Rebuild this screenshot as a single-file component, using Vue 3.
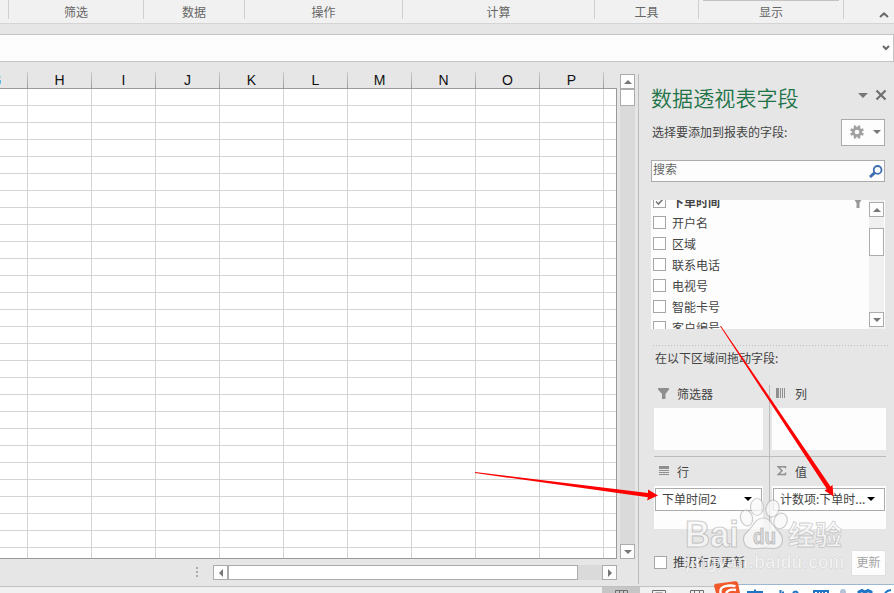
<template>
  <div class="excel">
    <!-- ribbon group captions -->
    <div class="ribbon">
      <div class="group edge"></div>
      <div v-for="g in groups" :key="g.name" class="group" :style="{ width: g.width + 'px' }">
        <span>{{ g.name }}</span>
      </div>
      <svg class="collapse" width="10" height="6" viewBox="0 0 10 6"><path d="M1 5 5 1.4 9 5" /></svg>
      <i class="gallery-edge"></i>
    </div>

    <div class="formula-row">
      <div class="formula">
        <svg width="8" height="6" viewBox="0 0 8 6"><path d="M1 1 4 4 7 1" /></svg>
      </div>
    </div>

    <div class="main">
      <div class="sheet">
        <div class="sheet-body">
          <div class="cells">
            <div class="headers">
              <div class="head first"><span>G</span></div>
              <div v-for="c in columns" :key="c" class="head">{{ c }}</div>
            </div>
            <div class="rows"></div>
          </div>
          <div class="vscroll">
            <div class="sbtn"><i class="tri up"></i></div>
            <div class="thumb"></div>
            <div class="track"></div>
            <div class="sbtn"><i class="tri down"></i></div>
          </div>
        </div>
        <div class="hscroll">
          <div class="grip"><i></i><i></i><i></i></div>
          <div class="sbtn"><i class="tri left"></i></div>
          <div class="hthumb"></div>
          <div class="htrack"></div>
          <div class="sbtn"><i class="tri right"></i></div>
        </div>
      </div>

      <div class="pane">
        <div class="title">
          <h1>数据透视表字段</h1>
          <i class="tri caret"></i>
          <svg width="12" height="12" viewBox="0 0 12 12"><path d="M1.5 1.5 10.5 10.5M10.5 1.5 1.5 10.5" /></svg>
        </div>
        <div class="choose">
          <span>选择要添加到报表的字段:</span>
          <div class="tools">
            <svg width="14" height="14" viewBox="0 0 14 14">
              <circle cx="7" cy="7" r="3.7" fill="none" stroke="#a0a0a0" stroke-width="2.8" />
              <path d="M5 .5v3M9 .5v3M5 10.500v3M9 10.500v3M.6 4.500l2.800 1M.6 9.500l2.800-1M13.400 4.500l-2.800 1M13.400 9.500l-2.800-1" stroke="#a0a0a0" stroke-width="2.500" />
            </svg>
            <i class="tri caret small"></i>
          </div>
        </div>
        <div class="search">
          <span>搜索</span>
          <svg width="14" height="13" viewBox="0 0 14 13">
            <circle cx="8.6" cy="4.9" r="3.9" />
            <path class="handle" d="M5.900 7.500 1 12" />
          </svg>
        </div>
        <div class="fields">
          <div class="list">
            <div v-for="f in fields" :key="f.name" class="field" :class="{ bold: f.checked }">
              <div class="box">
                <svg v-if="f.checked" width="11" height="11" viewBox="0 0 11 11"><path d="M2 5.5 4.5 8 9 3" /></svg>
              </div>
              <span>{{ f.name }}</span>
              <svg v-if="f.checked" class="funnel" width="8" height="9" viewBox="0 0 8 9"><path d="M0 0h8L5.5 4v5h-3V4z" /></svg>
            </div>
          </div>
          <div class="list-scroll">
            <div class="sbtn"><i class="tri up"></i></div>
            <div class="thumb"></div>
            <div class="sbtn"><i class="tri down"></i></div>
          </div>
        </div>
        <div class="drag">在以下区域间拖动字段:</div>
        <div class="areas">
          <div class="area">
            <div class="caption">
              <svg width="12" height="12" viewBox="0 0 12 12"><path fill="#8f8f8f" d="M0 0h11v1.500L7.500 6v5H4V6L0 1.500z" /></svg>
              <span>筛选器</span>
            </div>
            <div class="drop"></div>
          </div>
          <div class="area right">
            <div class="caption">
              <svg width="12" height="11" viewBox="0 0 12 11"><path fill="#8f8f8f" d="M0 0h3v10H0zM4 0h1v10H4zM6 0h1v10H6zM8 0h1v10H8z" /></svg>
              <span>列</span>
            </div>
            <div class="drop"></div>
          </div>
          <div class="area bottom">
            <div class="caption">
              <svg width="12" height="10" viewBox="0 0 12 10"><path fill="#8f8f8f" d="M1 0h10v3H1zM1 4h10v1H1zM1 6h10v1H1zM1 8h10v1H1z" /></svg>
              <span>行</span>
            </div>
            <div class="drop"><div class="pill"><span>下单时间2</span><i class="tri black"></i></div></div>
          </div>
          <div class="area right bottom">
            <div class="caption">
              <svg width="12" height="10" viewBox="0 0 12 10"><path fill="none" stroke="#8f8f8f" stroke-width="1.4" d="M9.500 2.500V.7H2.200L6 4.700 2.200 8.500H9.500V6.500" /></svg>
              <span>值</span>
            </div>
            <div class="drop"><div class="pill"><span>计数项:下单时...</span><i class="tri black"></i></div></div>
          </div>
        </div>
        <div class="defer">
          <div class="box"></div>
          <span>推迟布局更新</span>
          <div class="update">更新</div>
        </div>
      </div>
    </div>

    <div class="status">
      <div class="view active"><svg width="13" height="6" viewBox="0 0 13 6"><path d="M.5 6V.5h12V6M4.500.5V6M8.500.5V6M0 4.500h13" /></svg></div>
      <div class="view"><svg width="14" height="6" viewBox="0 0 14 6"><path d="M.5 6V.5h13V6M3.500 6V3h7v3" /></svg></div>
      <div class="view"><svg width="14" height="6" viewBox="0 0 14 6"><path d="M.5 6V.5h13V6M4.500.5V4M9.500.5V6M0 4.500h13" /></svg></div>
    </div>

    <!-- input method bar floating over the status bar -->
    <svg class="ime" width="182" height="13" viewBox="712 580 182 13">
      <path d="M735 584.500H894V593H735z" fill="#fff" />
      <path d="M738 584.500H894" stroke="#9fb6d0" />
      <path d="M714 585.500Q714 584.300 716 583.800L735 581.200Q737.500 581 738 583L740 593H716z" fill="#f1592a" />
      <path d="M735.500 586.200C728 584.500 721 586.500 720.500 590.500L720.500 593M736 590Q729 588.500 726 593" fill="none" stroke="#fff" stroke-width="2.400" />
      <g fill="none" stroke="#1f74c4" stroke-width="2">
        <path d="M748 593V592H762V593M755 589.500V593" />
        <path d="M780.500 590V593M782 592.500H784M793 593Q795.500 590 798 593" />
        <path d="M814 593V591H828V593M818 591V593M821 591V593M824 591V593" />
        <path d="M859 593V592L862 590.500Q865 593 868 590.500L871 592V593" stroke-width="3" />
        <path d="M885 593Q887 590.500 891 590" />
      </g>
      <circle cx="843" cy="592" r="3" fill="#b4c3d8" />
    </svg>

    <svg class="overlay" width="894" height="593" viewBox="0 0 894 593">
      <g class="mark">
        <text class="logo" x="685" y="547" font-size="36" textLength="54" lengthAdjust="spacingAndGlyphs">Bai</text>
        <ellipse cx="746.500" cy="518" rx="6" ry="8" transform="rotate(-15 746.500 518)" />
        <ellipse cx="757" cy="507" rx="6.500" ry="8.500" />
        <ellipse cx="772.500" cy="508.500" rx="6.500" ry="8.500" transform="rotate(12 772.500 508.500)" />
        <ellipse cx="780.500" cy="521" rx="6.500" ry="8" transform="rotate(25 780.500 521)" />
        <path d="M763 518C755 518 753 527 747 532C741 537 743 548 752 548.500C759 549 766 547 773 548.500C783 549 785 538 779 532C773 527 771 518 763 518Z" />
        <text class="logo du" x="753" y="544" font-size="22" textLength="23" lengthAdjust="spacingAndGlyphs">du</text>
        <text class="cjk" x="788" y="545" font-size="27" textLength="54">经验</text>
        <text class="url" x="686" y="568" font-size="18" textLength="158">jingyan.baidu.com</text>
      </g>
      <g fill="#fe0000">
        <path d="M475 472 475 473 648 497.200 647 500.500 658 495.500 648 489.500 648 493z" />
        <path d="M720 326 721 326 830.500 486.500 832.500 485 833.500 496.500 824.500 490.500 826.800 489z" />
      </g>
    </svg>
  </div>
</template>

<script setup>
const groups = [
  { name: '筛选', width: 135 },
  { name: '数据', width: 101 },
  { name: '操作', width: 158 },
  { name: '计算', width: 192 },
  { name: '工具', width: 104 },
  { name: '显示', width: 145 }
];

const columns = ['H', 'I', 'J', 'K', 'L', 'M', 'N', 'O', 'P', ''];

const fields = [
  { name: '下单时间', checked: true },
  { name: '开户名' },
  { name: '区域' },
  { name: '联系电话' },
  { name: '电视号' },
  { name: '智能卡号' },
  { name: '客户编号' }
];
</script>

<style>
body {
  overflow: hidden;
}
</style>

<style scoped>
.excel {
  position: relative;
  width: 894px;
  height: 593px;
  overflow: hidden;
  display: flex;
  flex-direction: column;
  background: #e6e6e6;
  color: #444;
  font: 12px/16px "Noto Sans CJK SC", sans-serif;
}

.excel * {
  box-sizing: border-box;
}

svg {
  display: block;
  flex: none;
}

/* ribbon */
.ribbon {
  position: relative;
  display: flex;
  flex: none;
  height: 24px;
  background: #f1f1f1;
  border-bottom: 1px solid #d4d4d4;
}

.group {
  height: 19px;
  padding-top: 4px;
  border-right: 1px solid #d0d0d0;
  text-align: center;
  color: #666;
}

.edge {
  width: 9px;
}

.collapse {
  margin: 12px 0 0 35px;
  fill: none;
  stroke: #6a6a6a;
  stroke-width: 2;
}

.gallery-edge {
  position: absolute;
  left: 703px;
  top: 0;
  width: 136px;
  height: 1px;
  background: #c3c3c3;
}

/* formula bar */
.formula-row {
  flex: none;
  padding: 10px 0 0;
}

.formula {
  display: flex;
  justify-content: flex-end;
  height: 28px;
  padding: 10px 3px 0 0;
  background: #fdfdfd;
  border: 1px solid #c3c3c3;
  border-left: 0;
}

.formula svg {
  fill: none;
  stroke: #6a6a6a;
  stroke-width: 2;
}

.main {
  display: flex;
  flex: none;
  height: 524px;
}

.sheet {
  width: 638px;
}

.sheet-body {
  display: flex;
  height: 497px;
}

.cells {
  width: 617px;
}

.headers {
  display: flex;
  height: 27px;
  padding-top: 10px;
  border-bottom: 1px solid #999;
  overflow: hidden;
}

.head {
  flex: none;
  width: 64px;
  height: 16px;
  border-right: 1px solid;
  border-image: linear-gradient(#d2d2d2, #969696) 1;
  color: #111;
  font: 14px/17px "Liberation Sans", sans-serif;
  text-align: center;
}

.head:last-child {
  border: 0;
  width: 12px;
}

.first {
  width: 28px;
  color: #52aee0;
  text-align: left;
}

.first span {
  display: block;
  width: 1px;
  height: 16px;
  overflow: hidden;
  text-indent: -9px;
}

.rows {
  height: 470px;
  border-right: 1px solid #999;
  border-bottom: 1px solid #999;
  background:
    repeating-linear-gradient(90deg, transparent 0 63px, #d4d4d4 63px 64px) -36px 0 / 1000px 100% no-repeat,
    repeating-linear-gradient(transparent 0 16px, #d4d4d4 16px 17px),
    #fff;
}

/* scrollbars */
.sbtn {
  display: flex;
  align-items: center;
  justify-content: center;
  flex: none;
  width: 15px;
  height: 15px;
  background: #fdfdfd;
  border: 1px solid #ababab;
}

.tri {
  display: block;
  flex: none;
  width: 0;
  height: 0;
  border: 4px solid transparent;
}

.up {
  border-top: 0;
  border-bottom-color: #777;
}

.down,
.caret {
  border-bottom: 0;
  border-top-color: #777;
}

.left {
  border-left: 0;
  border-right-color: #777;
}

.right.tri {
  border-right: 0;
  border-left-color: #777;
}

.black {
  border-bottom: 0;
  border-top: 4px solid #000;
}

.vscroll {
  display: flex;
  flex-direction: column;
  width: 15px;
  margin: 12px 0 0 3px;
}

.thumb {
  flex: none;
  height: 17px;
  background: #fff;
  border: 1px solid #ababab;
}

.track {
  flex: 1;
  background: #dadada;
}

.hscroll {
  display: flex;
  height: 15px;
  margin-top: 6px;
  padding-left: 196px;
}

.grip {
  display: flex;
  flex-direction: column;
  gap: 2px;
  width: 17px;
  padding-top: 2px;
}

.grip i {
  width: 2px;
  height: 2px;
  background: #ababab;
}

.hthumb {
  width: 350px;
  background: #fff;
  border: 1px solid #ababab;
}

.htrack {
  width: 24px;
  background: #dadada;
}

/* field pane */
.pane {
  width: 256px;
  height: 510px;
  margin-top: 12px;
  padding-left: 12px;
  border-left: 1px solid #bcbcbc;
}

.title {
  display: flex;
  height: 45px;
}

h1 {
  width: 207px;
  margin: 0;
  padding-top: 9px;
  font-family: "Noto Sans CJK SC DemiLight", "Noto Sans CJK SC", sans-serif;
  font-size: 21px;
  font-weight: 350;
  line-height: 28px;
  letter-spacing: 0.1px;
  color: #217346;
  white-space: nowrap;
}

.caret {
  border-width: 5px 5px 0;
  margin: 19px 7px 0 0;
}

.title svg {
  margin-top: 15px;
  fill: none;
  stroke: #6f6f6f;
  stroke-width: 2.2;
}

.choose {
  display: flex;
  height: 41px;
  padding-top: 5px;
}

.choose > span {
  width: 190px;
  padding-left: 1px;
}

.tools {
  display: flex;
  width: 44px;
  height: 27px;
  margin-top: -5px;
  padding: 5px 0 0 8px;
  background: #fdfdfd;
  border: 1px solid #ababab;
}

.tools .small {
  border-width: 4px 4px 0;
  margin: 5px 0 0 9px;
}

.search {
  display: flex;
  justify-content: space-between;
  width: 234px;
  height: 22px;
  padding: 0 1px 0 1px;
  background: #fdfdfd;
  border: 1px solid #ababab;
  color: #666;
}

.search svg {
  margin-top: 4px;
  fill: none;
  stroke: #3d6eb0;
  stroke-width: 1.8;
}

.search .handle {
  stroke-width: 3;
}

.fields {
  display: flex;
  width: 234px;
  height: 129px;
  margin-top: 18px;
  overflow: hidden;
  background: #fdfdfd;
}

.list {
  width: 218px;
  margin-top: -9px;
}

.field {
  display: flex;
  align-items: center;
  height: 21px;
  padding-left: 2px;
}

.box {
  flex: none;
  width: 13px;
  height: 13px;
  background: #fff;
  border: 1px solid #a6a6a6;
}

.box svg {
  fill: none;
  stroke: #777;
  stroke-width: 1.6;
}

.field span {
  width: 182px;
  margin-left: 6px;
}

.bold span {
  font-weight: 700;
}

.field .funnel {
  margin-top: 3px;
  fill: #999;
}

.list-scroll {
  width: 15px;
  padding-top: 2px;
  background: #f0f0f0;
}

.list-scroll .thumb {
  height: 28px;
  margin: 11px 0 56px;
}

.drag {
  width: 236px;
  height: 40px;
  margin: 16px 0 0 2px;
  padding: 5px 0 0 2px;
  background: repeating-linear-gradient(90deg, #bdbdbd 0 1px, transparent 1px 3px) 0 0 / 100% 1px no-repeat;
}

/* drop areas */
.areas {
  display: grid;
  grid-template-columns: 116px 116px;
  grid-template-rows: 72px 72px;
  margin-left: 3px;
}

.area {
  border-right: 1px solid #bcbcbc;
  border-bottom: 1px solid #bcbcbc;
}

.area.right {
  padding-left: 2px;
  border-right: 0;
}

.area.bottom {
  border-bottom: 0;
}

.area:not(.right) .drop {
  width: 109px;
}

.caption {
  display: flex;
  height: 23px;
  padding-left: 4px;
}

.caption svg {
  margin-top: 3px;
}

.caption span {
  margin: 1px 0 0 7px;
}

.right .caption span {
  margin-left: 7px;
}

.bottom .caption {
  height: 29px;
  padding-top: 6px;
}

.drop {
  width: 114px;
  height: 42px;
  background: #fdfdfd;
}

.bottom .drop {
  height: 43px;
  padding: 2px 1px 0;
}

.pill {
  display: flex;
  align-items: center;
  justify-content: space-between;
  height: 23px;
  padding: 0 9px 2px 6px;
  border: 1px solid #ababab;
  background: #fff;
  white-space: nowrap;
}

.defer {
  display: flex;
  align-items: flex-start;
  margin: 21px 0 0 3px;
}

.defer .box {
  margin-top: 6px;
}

.defer span {
  width: 178px;
  margin: 4px 0 0 6px;
}

.update {
  width: 35px;
  height: 26px;
  background: #fdfdfd;
  border: 1px solid #e0e0e0;
  color: #a5a5a5;
  line-height: 22px;
  text-align: center;
}

.status {
  display: flex;
  flex: none;
  height: 7px;
  padding-left: 602px;
  background: #f1f1f1;
  border-top: 1px solid #c0c0c0;
}

.view {
  display: flex;
  justify-content: center;
  width: 38px;
  padding-top: 3px;
}

.active {
  background: #c6c6c6;
}

.view path {
  fill: none;
  stroke: #6e6e6e;
}

.ime {
  position: absolute;
  right: 0;
  bottom: 0;
}

.overlay {
  position: absolute;
  left: 0;
  top: 0;
}

.mark {
  fill: rgba(248, 248, 248, 0.75);
  stroke: rgba(150, 150, 150, 0.45);
  stroke-width: 1.2;
}

.logo {
  font-family: "Liberation Sans", sans-serif;
  font-weight: 700;
}

.du {
  fill: rgba(215, 215, 215, 0.8);
}

.cjk {
  font-family: "Noto Sans CJK SC", sans-serif;
  font-weight: 700;
  stroke-width: 0.8;
}

.url {
  font-family: "Liberation Sans", sans-serif;
  fill: rgba(252, 252, 252, 0.8);
  stroke: rgba(190, 190, 190, 0.5);
  stroke-width: 1;
  paint-order: stroke;
}
</style>
